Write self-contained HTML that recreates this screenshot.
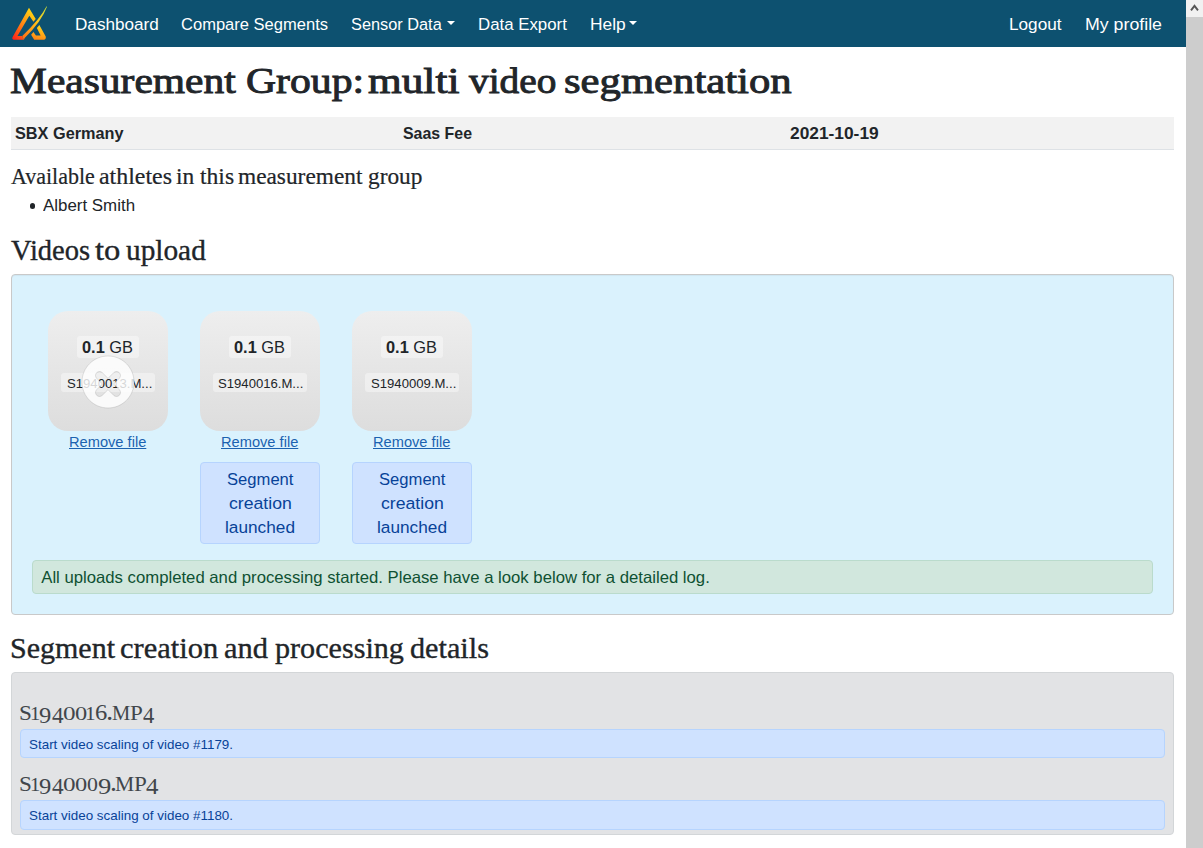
<!DOCTYPE html>
<html><head><meta charset="utf-8"><title>Measurement Group</title>
<style>
html,body{margin:0;padding:0;}
body{width:1203px;height:848px;overflow:hidden;position:relative;background:#fff;font-family:"Liberation Sans",sans-serif;color:#212529;}
.t{position:absolute;white-space:nowrap;transform-origin:0 0;}
.g{position:absolute;white-space:nowrap;}
.nav{position:absolute;left:0;top:0;width:1186px;height:47px;background:#0d5170;}
.sb{position:absolute;left:1186px;top:0;width:17px;height:848px;background:#cdcdcd;}
.sbu{position:absolute;left:0;top:0;width:17px;height:17px;background:#f1f1f1;}
.row{position:absolute;left:11px;top:117px;width:1163px;height:32px;background:#f2f2f2;border-bottom:1px solid #dee2e6;}
.dz{position:absolute;left:11px;top:274px;width:1161px;height:339px;background:#daf2fd;border:1px solid #c9c9c9;border-radius:4px;box-shadow:inset 0 1px 1px rgba(0,0,0,.05);}
.pv{position:absolute;top:311px;width:120px;height:120px;border-radius:20px;background:linear-gradient(to bottom,#eeeeee,#dddddd);}
.ok{position:absolute;left:32px;top:560px;width:1119px;height:32px;background:#d1e7dd;border:1px solid #badbcc;border-radius:4px;}
.seg{position:absolute;top:462px;width:118px;height:80px;background:#cfe2ff;border:1px solid #b6d4fe;border-radius:4px;}
.gr{position:absolute;left:11px;top:672px;width:1161px;height:161px;background:#e2e3e5;border:1px solid #d3d6d8;border-radius:4px;}
.al{position:absolute;left:20px;width:1143px;height:27px;background:#cfe2ff;border:1px solid #b6d4fe;border-radius:4px;}
.caret{position:absolute;top:21px;width:0;height:0;border-left:4px solid transparent;border-right:4px solid transparent;border-top:4px solid #fff;}
.bullet{position:absolute;left:29.5px;top:203.2px;width:5.6px;height:5.6px;border-radius:50%;background:#212529;}
.szbg{position:absolute;top:336px;width:62px;height:22px;background:rgba(255,255,255,.4);border-radius:3px;}
.fnbg{position:absolute;top:373px;width:93.5px;height:19px;background:rgba(255,255,255,.4);border-radius:3px;}
.sbu svg{position:absolute;left:0;top:0;}
</style></head><body>
<div class="nav"></div>
<div class="sb"><div class="sbu"><svg width="17" height="17" viewBox="0 0 17 17"><path d="M5 10.4 L8.5 5.9 L12 10.4" fill="none" stroke="#555555" stroke-width="1.9"/></svg></div></div>
<div class="row"></div>
<div class="dz"></div>

<div class="pv" style="left:48px"></div>
<div class="pv" style="left:200px"></div>
<div class="pv" style="left:352px"></div>
<div class="seg" style="left:200px"></div>
<div class="seg" style="left:352px"></div>
<svg style="position:absolute;left:8px;top:4px" width="44" height="40" viewBox="0 0 933 848">
<defs><linearGradient id="lg" x1="0" y1="1" x2="0.75" y2="0" gradientUnits="objectBoundingBox">
<stop offset="0" stop-color="#ff1a1a"/><stop offset="0.45" stop-color="#ff7a14"/><stop offset="1" stop-color="#ffd814"/></linearGradient>
<linearGradient id="lg2" x1="0" y1="1" x2="0.3" y2="0" gradientUnits="objectBoundingBox">
<stop offset="0" stop-color="#ff7a14"/><stop offset="1" stop-color="#ffd21a"/></linearGradient>
<linearGradient id="lg3" x1="0" y1="1" x2="1" y2="0">
<stop offset="0" stop-color="#ff6a14"/><stop offset="0.6" stop-color="#ffc81a"/><stop offset="1" stop-color="#c8e03a"/></linearGradient></defs>
<path fill="url(#lg)" d="M445 82 L588 318 L540 378 L452 250 L200 680 L300 680 L335 760 L125 760 Q80 755 95 705 Z"/>
<path fill="url(#lg3)" d="M302 680 Q672 330 818 50 L826 60 Q712 372 354 722 L336 762 Z"/>
<path fill="url(#lg2)" d="M612 508 L665 445 L800 690 Q812 755 760 760 L555 760 L490 650 L540 595 L592 668 L692 668 Z"/>
</svg>
<div class="caret" style="left:447px"></div><div class="caret" style="left:629px"></div>
<div class="bullet"></div>
<div class="szbg" style="left:77px"></div><div class="fnbg" style="left:61.4px"></div>
<div class="szbg" style="left:229px"></div><div class="fnbg" style="left:213.4px"></div>
<div class="szbg" style="left:381px"></div><div class="fnbg" style="left:365.4px"></div>
<div class="ok"></div>
<div class="gr"></div>
<div class="al" style="top:729px"></div>
<div class="al" style="top:800px;height:28px"></div>
<div class="t" style='left:74.59px;top:16.01px;font-family:"Liberation Sans", sans-serif;font-size:16.86px;line-height:17px;color:#ffffff;transform:scaleX(1.0162);'>Dashboard</div>
<div class="t" style='left:181.17px;top:16.01px;font-family:"Liberation Sans", sans-serif;font-size:16.86px;line-height:17px;color:#ffffff;transform:scaleX(0.9805);'>Compare Segments</div>
<div class="t" style='left:351.27px;top:16.01px;font-family:"Liberation Sans", sans-serif;font-size:16.86px;line-height:17px;color:#ffffff;transform:scaleX(0.9679);'>Sensor Data</div>
<div class="t" style='left:477.91px;top:16.01px;font-family:"Liberation Sans", sans-serif;font-size:16.86px;line-height:17px;color:#ffffff;transform:scaleX(0.9977);'>Data Export</div>
<div class="t" style='left:590.07px;top:16.01px;font-family:"Liberation Sans", sans-serif;font-size:16.86px;line-height:17px;color:#ffffff;transform:scaleX(1.0282);'>Help</div>
<div class="t" style='left:1009.18px;top:16.01px;font-family:"Liberation Sans", sans-serif;font-size:16.86px;line-height:17px;color:#ffffff;transform:scaleX(1.0193);'>Logout</div>
<div class="t" style='left:1084.84px;top:16.01px;font-family:"Liberation Sans", sans-serif;font-size:16.86px;line-height:17px;color:#ffffff;transform:scaleX(1.0530);'>My profile</div>
<div class="t" style='left:10.46px;top:63.01px;font-family:"Liberation Serif", serif;font-size:35.74px;line-height:36px;color:#212529;transform:scaleX(1.1606);-webkit-text-stroke:0.9px #212529;'>Measurement</div>
<div class="t" style='left:246.03px;top:63.01px;font-family:"Liberation Serif", serif;font-size:35.74px;line-height:36px;color:#212529;transform:scaleX(1.1666);-webkit-text-stroke:0.9px #212529;'>Group:</div>
<div class="t" style='left:367.83px;top:63.01px;font-family:"Liberation Serif", serif;font-size:35.74px;line-height:36px;color:#212529;transform:scaleX(1.2123);-webkit-text-stroke:0.9px #212529;'>multi</div>
<div class="t" style='left:469.00px;top:63.01px;font-family:"Liberation Serif", serif;font-size:35.74px;line-height:36px;color:#212529;transform:scaleX(1.1013);-webkit-text-stroke:0.9px #212529;'>video</div>
<div class="t" style='left:564.49px;top:63.01px;font-family:"Liberation Serif", serif;font-size:35.74px;line-height:36px;color:#212529;transform:scaleX(1.1945);-webkit-text-stroke:0.9px #212529;'>segmentation</div>
<div class="t" style='left:14.51px;top:125.00px;font-family:"Liberation Sans", sans-serif;font-size:17.01px;line-height:17px;color:#212529;font-weight:bold;transform:scaleX(0.9573);'>SBX Germany</div>
<div class="t" style='left:402.52px;top:125.00px;font-family:"Liberation Sans", sans-serif;font-size:17.01px;line-height:17px;color:#212529;font-weight:bold;transform:scaleX(0.9357);'>Saas Fee</div>
<div class="t" style='left:790.39px;top:125.00px;font-family:"Liberation Sans", sans-serif;font-size:17.01px;line-height:17px;color:#212529;font-weight:bold;transform:scaleX(1.0196);'>2021-10-19</div>
<div class="t" style='left:11.08px;top:166.01px;font-family:"Liberation Serif", serif;font-size:22.3px;line-height:22px;color:#212529;transform:scaleX(0.9861);-webkit-text-stroke:0.2px #212529;'>Available</div>
<div class="t" style='left:98.86px;top:166.01px;font-family:"Liberation Serif", serif;font-size:22.3px;line-height:22px;color:#212529;transform:scaleX(1.0720);-webkit-text-stroke:0.2px #212529;'>athletes</div>
<div class="t" style='left:176.03px;top:166.01px;font-family:"Liberation Serif", serif;font-size:22.3px;line-height:22px;color:#212529;transform:scaleX(1.0509);-webkit-text-stroke:0.2px #212529;'>in</div>
<div class="t" style='left:199.66px;top:166.01px;font-family:"Liberation Serif", serif;font-size:22.3px;line-height:22px;color:#212529;transform:scaleX(1.0589);-webkit-text-stroke:0.2px #212529;'>this</div>
<div class="t" style='left:238.43px;top:166.01px;font-family:"Liberation Serif", serif;font-size:22.3px;line-height:22px;color:#212529;transform:scaleX(1.0465);-webkit-text-stroke:0.2px #212529;'>measurement</div>
<div class="t" style='left:367.71px;top:166.01px;font-family:"Liberation Serif", serif;font-size:22.3px;line-height:22px;color:#212529;transform:scaleX(1.0463);-webkit-text-stroke:0.2px #212529;'>group</div>
<div class="t" style='left:42.96px;top:197.00px;font-family:"Liberation Sans", sans-serif;font-size:16.42px;line-height:16px;color:#212529;transform:scaleX(1.0301);'>Albert Smith</div>
<div class="t" style='left:11.01px;top:236.00px;font-family:"Liberation Serif", serif;font-size:28.71px;line-height:29px;color:#212529;transform:scaleX(0.9935);-webkit-text-stroke:0.35px #212529;'>Videos</div>
<div class="t" style='left:94.77px;top:236.00px;font-family:"Liberation Serif", serif;font-size:28.71px;line-height:29px;color:#212529;transform:scaleX(1.1356);-webkit-text-stroke:0.35px #212529;'>to</div>
<div class="t" style='left:126.23px;top:236.00px;font-family:"Liberation Serif", serif;font-size:28.71px;line-height:29px;color:#212529;transform:scaleX(1.0214);-webkit-text-stroke:0.35px #212529;'>upload</div>
<div class="t" style='left:41.26px;top:569.01px;font-family:"Liberation Sans", sans-serif;font-size:16.72px;line-height:17px;color:#0f5132;'>All uploads completed and processing started. Please have a look below for a detailed log.</div>
<div class="t" style='left:10.02px;top:634.00px;font-family:"Liberation Serif", serif;font-size:28.71px;line-height:29px;color:#212529;transform:scaleX(1.0452);-webkit-text-stroke:0.35px #212529;'>Segment</div>
<div class="t" style='left:120.46px;top:634.00px;font-family:"Liberation Serif", serif;font-size:28.71px;line-height:29px;color:#212529;transform:scaleX(1.0623);-webkit-text-stroke:0.35px #212529;'>creation</div>
<div class="t" style='left:224.43px;top:634.00px;font-family:"Liberation Serif", serif;font-size:28.71px;line-height:29px;color:#212529;transform:scaleX(1.0618);-webkit-text-stroke:0.35px #212529;'>and</div>
<div class="t" style='left:275.25px;top:634.00px;font-family:"Liberation Serif", serif;font-size:28.71px;line-height:29px;color:#212529;transform:scaleX(1.0501);-webkit-text-stroke:0.35px #212529;'>processing</div>
<div class="t" style='left:409.64px;top:634.00px;font-family:"Liberation Serif", serif;font-size:28.71px;line-height:29px;color:#212529;transform:scaleX(1.0532);-webkit-text-stroke:0.35px #212529;'>details</div>
<div class="t" style='left:28.70px;top:738.01px;font-family:"Liberation Sans", sans-serif;font-size:13.37px;line-height:13px;color:#084298;transform:scaleX(1.0040);'>Start video scaling of video #1179.</div>
<div class="t" style='left:28.70px;top:809.01px;font-family:"Liberation Sans", sans-serif;font-size:13.37px;line-height:13px;color:#084298;transform:scaleX(1.0040);'>Start video scaling of video #1180.</div>
<div class="t" style='left:82.44px;top:339.00px;font-family:"Liberation Sans", sans-serif;font-size:16.72px;line-height:17px;color:#212529;transform:scaleX(0.9803);'><b>0.1</b> GB</div>
<div class="t" style='left:66.91px;top:377.00px;font-family:"Liberation Sans", sans-serif;font-size:12.79px;line-height:13px;color:#212529;transform:scaleX(1.0261);'>S1940013.M...</div>
<div class="t" style='left:68.79px;top:435.00px;font-family:"Liberation Sans", sans-serif;font-size:14.54px;line-height:15px;color:#1b62b0;transform:scaleX(1.0073);text-decoration:underline;text-underline-offset:1px;'>Remove file</div>
<div class="t" style='left:234.44px;top:339.00px;font-family:"Liberation Sans", sans-serif;font-size:16.72px;line-height:17px;color:#212529;transform:scaleX(0.9803);'><b>0.1</b> GB</div>
<div class="t" style='left:218.41px;top:377.00px;font-family:"Liberation Sans", sans-serif;font-size:12.79px;line-height:13px;color:#212529;transform:scaleX(1.0261);'>S1940016.M...</div>
<div class="t" style='left:221.29px;top:435.00px;font-family:"Liberation Sans", sans-serif;font-size:14.54px;line-height:15px;color:#1b62b0;transform:scaleX(1.0073);text-decoration:underline;text-underline-offset:1px;'>Remove file</div>
<div class="t" style='left:386.44px;top:339.00px;font-family:"Liberation Sans", sans-serif;font-size:16.72px;line-height:17px;color:#212529;transform:scaleX(0.9803);'><b>0.1</b> GB</div>
<div class="t" style='left:370.81px;top:377.00px;font-family:"Liberation Sans", sans-serif;font-size:12.79px;line-height:13px;color:#212529;transform:scaleX(1.0261);'>S1940009.M...</div>
<div class="t" style='left:373.29px;top:435.00px;font-family:"Liberation Sans", sans-serif;font-size:14.54px;line-height:15px;color:#1b62b0;transform:scaleX(1.0073);text-decoration:underline;text-underline-offset:1px;'>Remove file</div>
<div class="t" style='left:226.85px;top:471.00px;font-family:"Liberation Sans", sans-serif;font-size:16.86px;line-height:17px;color:#084298;transform:scaleX(0.9850);'>Segment</div>
<div class="t" style='left:228.85px;top:495.00px;font-family:"Liberation Sans", sans-serif;font-size:16.86px;line-height:17px;color:#084298;transform:scaleX(1.0479);'>creation</div>
<div class="t" style='left:225.14px;top:519.01px;font-family:"Liberation Sans", sans-serif;font-size:16.86px;line-height:17px;color:#084298;transform:scaleX(1.0224);'>launched</div>
<div class="t" style='left:378.85px;top:471.00px;font-family:"Liberation Sans", sans-serif;font-size:16.86px;line-height:17px;color:#084298;transform:scaleX(0.9850);'>Segment</div>
<div class="t" style='left:380.85px;top:495.00px;font-family:"Liberation Sans", sans-serif;font-size:16.86px;line-height:17px;color:#084298;transform:scaleX(1.0479);'>creation</div>
<div class="t" style='left:377.14px;top:519.01px;font-family:"Liberation Sans", sans-serif;font-size:16.86px;line-height:17px;color:#084298;transform:scaleX(1.0224);'>launched</div>
<div class="g" style='left:19.04px;top:703.14px;font-family:"Liberation Serif", serif;font-size:20.0px;line-height:20px;color:#41464b;transform-origin:0 16.75px;transform:scale(1.1579,1.0632);'>S</div>
<div class="g" style='left:29.91px;top:703.35px;font-family:"Liberation Serif", serif;font-size:20.0px;line-height:20px;color:#41464b;transform-origin:0 16.75px;transform:scale(1.0213,0.9697);'>1</div>
<div class="g" style='left:39.00px;top:705.72px;font-family:"Liberation Serif", serif;font-size:20.0px;line-height:20px;color:#41464b;transform-origin:0 16.75px;transform:scale(1.2281,1.1450);'>9</div>
<div class="g" style='left:51.54px;top:706.25px;font-family:"Liberation Serif", serif;font-size:20.0px;line-height:20px;color:#41464b;transform-origin:0 16.75px;transform:scale(1.1613,1.1939);'>4</div>
<div class="g" style='left:63.06px;top:703.17px;font-family:"Liberation Serif", serif;font-size:20.0px;line-height:20px;color:#41464b;transform-origin:0 16.75px;transform:scale(1.2588,0.8889);'>0</div>
<div class="g" style='left:75.28px;top:703.17px;font-family:"Liberation Serif", serif;font-size:20.0px;line-height:20px;color:#41464b;transform-origin:0 16.75px;transform:scale(1.2235,0.8889);'>0</div>
<div class="g" style='left:85.34px;top:703.35px;font-family:"Liberation Serif", serif;font-size:20.0px;line-height:20px;color:#41464b;transform-origin:0 16.75px;transform:scale(1.0638,0.9470);'>1</div>
<div class="g" style='left:94.86px;top:703.11px;font-family:"Liberation Serif", serif;font-size:20.0px;line-height:20px;color:#41464b;transform-origin:0 16.75px;transform:scale(1.2281,1.1896);'>6</div>
<div class="g" style='left:105.90px;top:702.94px;font-family:"Liberation Serif", serif;font-size:20.0px;line-height:20px;color:#41464b;transform-origin:0 16.75px;transform:scale(1.4583,1.3617);'>.</div>
<div class="g" style='left:111.64px;top:703.35px;font-family:"Liberation Serif", serif;font-size:20.0px;line-height:20px;color:#41464b;transform-origin:0 16.75px;transform:scale(1.0270,1.0916);'>M</div>
<div class="g" style='left:129.87px;top:703.35px;font-family:"Liberation Serif", serif;font-size:20.0px;line-height:20px;color:#41464b;transform-origin:0 16.75px;transform:scale(1.1531,1.0916);'>P</div>
<div class="g" style='left:142.85px;top:706.25px;font-family:"Liberation Serif", serif;font-size:20.0px;line-height:20px;color:#41464b;transform-origin:0 16.75px;transform:scale(1.1290,1.1939);'>4</div>
<div class="g" style='left:19.04px;top:774.14px;font-family:"Liberation Serif", serif;font-size:20.0px;line-height:20px;color:#41464b;transform-origin:0 16.75px;transform:scale(1.1579,1.0632);'>S</div>
<div class="g" style='left:29.91px;top:774.35px;font-family:"Liberation Serif", serif;font-size:20.0px;line-height:20px;color:#41464b;transform-origin:0 16.75px;transform:scale(1.0213,0.9697);'>1</div>
<div class="g" style='left:39.00px;top:776.72px;font-family:"Liberation Serif", serif;font-size:20.0px;line-height:20px;color:#41464b;transform-origin:0 16.75px;transform:scale(1.2281,1.1450);'>9</div>
<div class="g" style='left:51.54px;top:777.25px;font-family:"Liberation Serif", serif;font-size:20.0px;line-height:20px;color:#41464b;transform-origin:0 16.75px;transform:scale(1.1613,1.1939);'>4</div>
<div class="g" style='left:63.06px;top:774.17px;font-family:"Liberation Serif", serif;font-size:20.0px;line-height:20px;color:#41464b;transform-origin:0 16.75px;transform:scale(1.2588,0.8889);'>0</div>
<div class="g" style='left:75.28px;top:774.17px;font-family:"Liberation Serif", serif;font-size:20.0px;line-height:20px;color:#41464b;transform-origin:0 16.75px;transform:scale(1.2235,0.8889);'>0</div>
<div class="g" style='left:86.88px;top:774.17px;font-family:"Liberation Serif", serif;font-size:20.0px;line-height:20px;color:#41464b;transform-origin:0 16.75px;transform:scale(1.0941,0.8889);'>0</div>
<div class="g" style='left:97.73px;top:777.02px;font-family:"Liberation Serif", serif;font-size:20.0px;line-height:20px;color:#41464b;transform-origin:0 16.75px;transform:scale(1.3333,1.1673);'>9</div>
<div class="g" style='left:109.81px;top:773.96px;font-family:"Liberation Serif", serif;font-size:20.0px;line-height:20px;color:#41464b;transform-origin:0 16.75px;transform:scale(1.3750,1.3191);'>.</div>
<div class="g" style='left:115.31px;top:774.35px;font-family:"Liberation Serif", serif;font-size:20.0px;line-height:20px;color:#41464b;transform-origin:0 16.75px;transform:scale(1.0811,1.0916);'>M</div>
<div class="g" style='left:133.87px;top:774.35px;font-family:"Liberation Serif", serif;font-size:20.0px;line-height:20px;color:#41464b;transform-origin:0 16.75px;transform:scale(1.1531,1.0916);'>P</div>
<div class="g" style='left:145.70px;top:777.25px;font-family:"Liberation Serif", serif;font-size:20.0px;line-height:20px;color:#41464b;transform-origin:0 16.75px;transform:scale(1.2473,1.1939);'>4</div>
<svg style="position:absolute;left:81px;top:355.4px" width="54" height="54" viewBox="0 0 54 54"><path fill="#FFFFFF" fill-opacity="0.8165" stroke="#747474" stroke-opacity="0.1988" fill-rule="evenodd" d="M32.6568542,29 L38.3106978,23.3461564 C39.8771021,21.7797521 39.8758057,19.2483887 38.3137085,17.6862915 C36.7547899,16.1273729 34.2176035,16.1255422 32.6538436,17.6893022 L27,23.3431458 L21.3461564,17.6893022 C19.7823965,16.1255422 17.2452101,16.1273729 15.6862915,17.6862915 C14.1241943,19.2483887 14.1228979,21.7797521 15.6893022,23.3461564 L21.3431458,29 L15.6893022,34.6538436 C14.1228979,36.2202479 14.1241943,38.7516113 15.6862915,40.3137085 C17.2452101,41.8726271 19.7823965,41.8744578 21.3461564,40.3106978 L27,34.6568542 L32.6538436,40.3106978 C34.2176035,41.8744578 36.7547899,41.8726271 38.3137085,40.3137085 C39.8758057,38.7516113 39.8771021,36.2202479 38.3106978,34.6538436 L32.6568542,29 Z M27,53 C41.3594035,53 53,41.3594035 53,27 C53,12.6405965 41.3594035,1 27,1 C12.6405965,1 1,12.6405965 1,27 C1,41.3594035 12.6405965,53 27,53 Z"/></svg>
</body></html>
